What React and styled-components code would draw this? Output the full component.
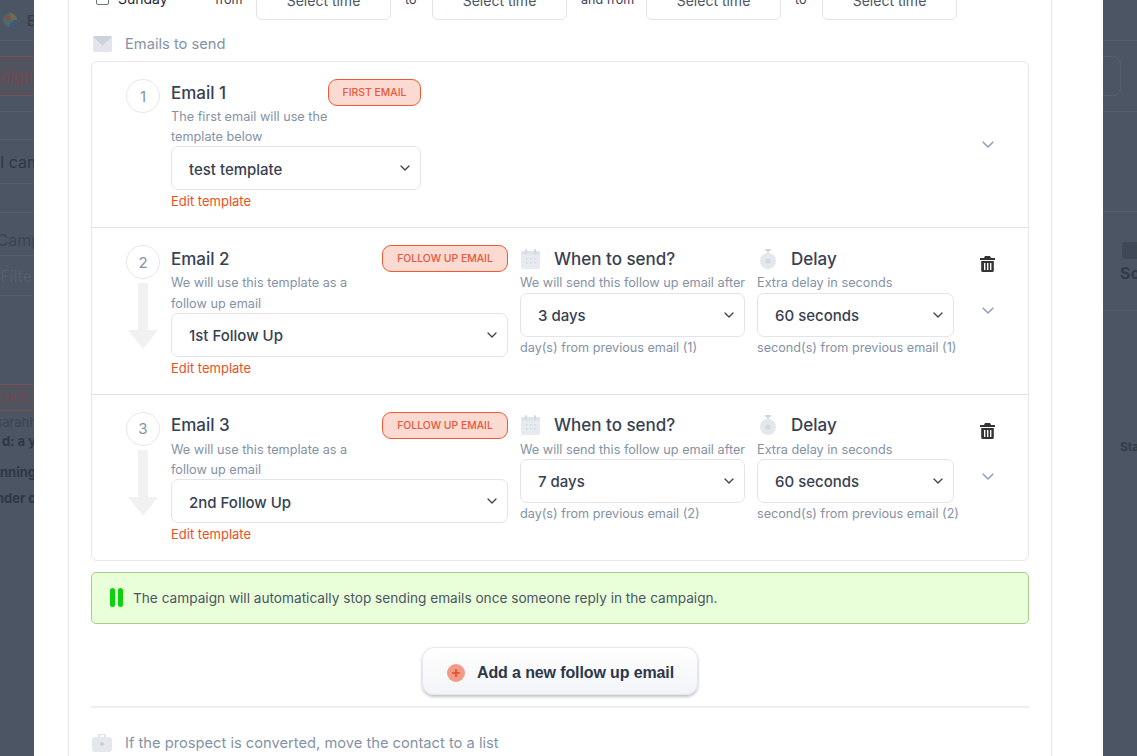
import React from "react";
import styled, { createGlobalStyle } from "styled-components";

const Global = createGlobalStyle`
  html, body { margin: 0; padding: 0; height: 100%; background: #4b5563; }
  body { font-family: Inter, "Liberation Sans", sans-serif; }
  * { box-sizing: border-box; }
`;

const Page = styled.div`
  display: flex;
  width: 100%;
  height: 756px;
  overflow: hidden;
  background: #4b5563;
`;
const Strip = styled.aside`
  flex: 0 0 34px;
  width: 34px;
  height: 100%;
  overflow: hidden;
  display: flex;
  flex-direction: column;
  color: #2f3744;
  font-size: 15px;
`;
const StripRow = styled.div`
  height: ${(p) => p.$h}px;
  flex: 0 0 auto;
  display: flex;
  align-items: center;
  gap: 8px;
  white-space: nowrap;
  justify-content: ${(p) => (p.$start ? "flex-start" : "flex-end")};
  border-bottom: ${(p) => (p.$line ? "1px solid #545d6b" : "0")};
  font-weight: ${(p) => (p.$bold ? 700 : 400)};
  font-size: ${(p) => p.$size || 13}px;
  color: ${(p) => p.$color || "#2f3744"};
  padding-left: ${(p) => p.$pad || 0}px;
  padding-top: ${(p) => p.$top || 0}px;
  margin-right: ${(p) => -(p.$shift || 0)}px;
`;
const PinkBox = styled.div`
  height: 40px;
  flex: 0 0 auto;
  display: flex;
  align-items: center;
  white-space: nowrap;
  justify-content: flex-end;
  width: 41px;
  border: 1px solid #7b4e52;
  border-left: 0;
  border-right: 0;
  background: #51545f;
  color: #74474c;
  font-size: 16px;
`;
const Tag = styled(PinkBox)`
  width: 34px;
  height: 27px;
  font-size: 10.5px;
  letter-spacing: 0.6px;
  padding-right: 6px;
`;
const GhostBox = styled.div`
  width: 18px;
  height: 40px;
  flex: 0 0 auto;
  border: 1px solid #565f6c;
  border-left: 0;
  border-radius: 0 8px 8px 0;
`;
const Modal = styled.main`
  flex: 1 1 auto;
  height: 100%;
  background: #fff;
  padding: 0 34px;
  overflow: hidden;
`;
const Card = styled.div`
  margin-top: -24px;
  width: 984px;
  min-height: 900px;
  background: #fff;
  border: 1px solid #e6e8ee;
  border-top: 0;
  padding: 0 22px;
`;
const DayRow = styled.div`
  height: 44px;
  display: flex;
  align-items: center;
  font-size: 14px;
  color: #374151;
  padding-left: 5px;
`;
const DayLabel = styled.label`
  width: 119px;
  display: flex;
  align-items: center;
  gap: 9px;
  color: #1f2937;
  padding-top: 1px;
`;
const DayBox = styled.span`
  width: 13px;
  height: 13px;
  border: 1px solid #6b7280;
  border-radius: 2px;
  flex: 0 0 auto;
`;
const Conn = styled.span`
  flex: 0 0 ${(p) => p.$w}px;
  width: ${(p) => p.$w}px;
  padding-left: ${(p) => p.$pad}px;
  font-size: 12.5px;
  white-space: nowrap;
  padding-top: 3px;
`;
const TimeSelect = styled.div`
  flex: 0 0 135px;
  width: 135px;
  height: 44px;
  border: 1px solid #e2e4ec;
  border-radius: 6px;
  display: flex;
  align-items: center;
  justify-content: center;
  padding-top: 4px;
  color: #4b5563;
  font-size: 14px;
`;
const SectionHead = styled.div`
  display: flex;
  align-items: center;
  gap: 13px;
  height: 22px;
  margin-top: ${(p) => p.$mt}px;
  margin-bottom: ${(p) => p.$mb || 0}px;
  color: #8492a6;
  font-size: 14.7px;
  padding-left: 1px;
`;
const EmailList = styled.section`
  border: 1px solid #e5e7eb;
  border-radius: 6px;
`;
const EmailRow = styled.div`
  display: flex;
  padding: 17px 0 15.9px 34px;
  border-top: ${(p) => (p.$first ? "0" : "1px solid #dfe2e8")};
`;
const NumCol = styled.div`
  flex: 0 0 45px;
  width: 45px;
  display: flex;
  flex-direction: column;
`;
const Circle = styled.div`
  width: 34px;
  height: 34px;
  border-radius: 50%;
  border: 1px solid #e5e7eb;
  display: flex;
  align-items: center;
  justify-content: center;
  color: #8492a6;
  font-size: 15px;
`;
const Arrow = styled.svg`
  display: block;
  margin: 4px 0 0 2px;
`;
const Col = styled.div`
  flex: 0 0 ${(p) => p.$w}px;
  width: ${(p) => p.$w}px;
  margin-right: ${(p) => p.$mr || 0}px;
`;
const HeadRow = styled.div`
  height: 27px;
  display: flex;
  align-items: center;
  justify-content: space-between;
`;
const IconHead = styled(HeadRow)`
  justify-content: flex-start;
  gap: ${(p) => p.$gap}px;
  padding-left: ${(p) => p.$pad}px;
`;
const Title = styled.h3`
  margin: 0;
  padding-top: 1px;
  font-size: 17px;
  line-height: 27px;
  font-weight: 500;
  color: #374151;
`;
const Badge = styled.span`
  height: 27px;
  width: ${(p) => p.$w}px;
  display: inline-flex;
  align-items: center;
  justify-content: center;
  border: 1px solid #ee5a33;
  border-radius: 9px;
  background: #fbdad2;
  color: #e9573a;
  font-size: 10.4px;
  font-weight: 500;
  white-space: nowrap;
`;
const Desc = styled.p`
  margin: 1px 0 -1px;
  font-size: 12.7px;
  line-height: 20.2px;
  color: #8492a6;
  white-space: ${(p) => (p.$nowrap ? "nowrap" : "normal")};
  max-width: ${(p) => (p.$nowrap ? "none" : "180px")};
`;
const Select = styled.div`
  height: 44px;
  border: 1px solid #e2e4ec;
  border-radius: 7px;
  display: flex;
  align-items: center;
  justify-content: space-between;
  padding: 0 10px 0 17px;
  font-size: 15px;
  font-weight: 500;
  color: #374151;
  background: #fff;
`;
const SelectValue = styled.span`
  padding-top: 2px;
`;
const EditLink = styled.a`
  display: block;
  padding-top: 1px;
  font-size: 13px;
  line-height: 20px;
  color: #ee4f23;
`;
const Hint = styled.p`
  margin: 0;
  font-size: 12.65px;
  line-height: 22px;
  color: #8492a6;
  white-space: nowrap;
`;
const Actions = styled.div`
  flex: 0 0 auto;
  margin-left: auto;
  width: 74px;
  padding-right: 7px;
  padding-bottom: 2px;
  display: grid;
  grid-template-rows: 1fr auto 1fr;
  justify-items: center;
`;
const TrashSlot = styled.div`
  align-self: start;
  padding: 11px 1px 0 0;
  height: 27px;
`;
const Alert = styled.div`
  margin-top: 11px;
  height: 52px;
  border: 1px solid #a7cd8b;
  border-radius: 5px;
  background: #e9ffd9;
  display: flex;
  align-items: center;
  gap: 10px;
  padding-left: 18px;
  color: #4b5563;
  font-size: 13.65px;
`;
const PauseBars = styled.div`
  display: flex;
  gap: 3px;
`;
const PauseBar = styled.span`
  width: 5px;
  height: 19px;
  border-radius: 3px;
  background: #0bd20b;
`;
const ButtonRow = styled.div`
  margin-top: 23px;
  display: flex;
  justify-content: center;
`;
const AddButton = styled.button`
  width: 276px;
  height: 48px;
  border: 1px solid #e6e6ee;
  border-radius: 12px;
  background: linear-gradient(180deg, #ffffff, #f2f4f7);
  box-shadow: 0 2px 3px rgba(70, 80, 100, 0.35);
  display: flex;
  align-items: center;
  gap: 12px;
  padding: 4px 0 0 24px;
  font-family: "Liberation Sans", Arial, sans-serif;
  font-weight: 700;
  font-size: 16px;
  letter-spacing: -0.12px;
  color: #2d3748;
`;
const PlusCircle = styled.span`
  width: 18px;
  height: 18px;
  border-radius: 50%;
  background: #f19b86;
  display: flex;
  align-items: center;
  justify-content: center;
`;
const Divider = styled.hr`
  margin: 11px 0 0;
  border: 0;
  border-top: 2px solid #eeeff2;
`;

const Chevron = ({ color = "#374151", w = 10 }) => (
  <svg width={w} height={w * 0.6} viewBox="0 0 10 6" fill="none" stroke={color} strokeWidth="1.3" strokeLinecap="round" strokeLinejoin="round">
    <path d="M1 1l4 4 4-4" />
  </svg>
);
const Envelope = () => (
  <svg width="20" height="16" viewBox="-1 0 20 16">
    <rect width="19" height="16" rx="2" fill="#e2e6ec" />
    <path d="M1.5 0h16a1.5 1.5 0 0 1 1.2 1.2L9.5 9.5.3 1.2A1.5 1.5 0 0 1 1.5 0z" fill="#cdd3dc" />
  </svg>
);
const Calendar = () => (
  <svg width="19" height="20" viewBox="0 0 19 20">
    <rect y="2" width="19" height="18" rx="2" fill="#e7ebf0" />
    <rect y="2" width="19" height="4" rx="1.5" fill="#dfe4ea" />
    <rect x="4" width="2" height="5" rx="1" fill="#d3d9e1" />
    <rect x="13" width="2" height="5" rx="1" fill="#d3d9e1" />
    <g fill="#cfd6de">
      <rect x="5" y="9" width="1.5" height="1.5" /><rect x="9" y="9" width="1.5" height="1.5" /><rect x="13" y="9" width="1.5" height="1.5" />
      <rect x="5" y="13" width="1.5" height="1.5" /><rect x="9" y="13" width="1.5" height="1.5" /><rect x="13" y="13" width="1.5" height="1.5" />
    </g>
  </svg>
);
const Stopwatch = () => (
  <svg width="16" height="20" viewBox="0 0 16 20">
    <rect x="5" y="0" width="6" height="2" rx="1" fill="#d0d6de" />
    <rect x="7" y="2" width="2" height="3" fill="#d8dde4" />
    <circle cx="8" cy="12" r="8" fill="#e4e8ed" />
    <circle cx="8" cy="12" r="2.6" fill="#d3d9e0" />
  </svg>
);
const Trash = () => (
  <svg width="15" height="16" viewBox="0 0 15 16">
    <path d="M5 0h5l1 2h4v2H0V2h4z" fill="#333" />
    <path fillRule="evenodd" d="M1.2 5h12.6v9.5a1.5 1.5 0 0 1-1.5 1.5H2.7a1.5 1.5 0 0 1-1.5-1.5zM4 7v7h1.4V7zm3 0v7h1.4V7zm3 0v7h1.4V7z" fill="#333" />
  </svg>
);
const Case = () => (
  <svg width="20" height="18" viewBox="0 0 20 18">
    <path d="M7 4V2a2 2 0 0 1 2-2h2a2 2 0 0 1 2 2v2" fill="none" stroke="#dfe3e9" strokeWidth="2" />
    <rect y="3" width="20" height="15" rx="3" fill="#e4e8ed" />
    <circle cx="10" cy="10" r="2" fill="#c9d0d9" />
  </svg>
);
const DownArrow = () => (
  <Arrow width="30" height="66" viewBox="0 0 30 66">
    <path d="M10 0h10v47h10L15 66 0 47h10z" fill="#f1f1f1" />
  </Arrow>
);

const rows = [
  { n: 2, tpl: "1st Follow Up", days: "3 days" },
  { n: 3, tpl: "2nd Follow Up", days: "7 days" },
];

export default function App() {
  return (
    <Page>
      <Global />
      <Strip>
        <StripRow $h={41} $line $start $pad={1} $size={15} $color="#333b48">
          <svg width="18" height="18" viewBox="0 0 18 18" style={{ flex: "none" }}>
            <circle cx="9" cy="9" r="7" fill="#4d6b62" />
            <path d="M9 2a7 7 0 0 1 7 7H9z" fill="#6f6a50" />
            <circle cx="7" cy="7" r="2.5" fill="#7c4f57" />
            <path d="M9 16a7 7 0 0 0 7-7h-4a3 3 0 0 1-3 3z" fill="#3a5a80" />
          </svg>
          <span>B</span>
        </StripRow>
        <StripRow $h={15} />
        <PinkBox>Campaigns</PinkBox>
        <StripRow $h={16} $line />
        <StripRow $h={28} $line />
        <StripRow $h={44} $line $size={16} $shift={7}>All email cam</StripRow>
        <StripRow $h={29} $line />
        <StripRow $h={43} $line $size={16} $top={12} $shift={7} $color="#3b4452">
          Camp
        </StripRow>
        <StripRow $h={40} $line $size={16} $color="#565f6d" $shift={-2}>Filte</StripRow>
        <StripRow $h={88} />
        <Tag>SEQUENCE</Tag>
        <StripRow $h={22} $size={13} $color="#3b4452" $shift={3}>sarahh</StripRow>
        <StripRow $h={16} $bold $shift={2}>Subject d: a y</StripRow>
        <StripRow $h={14} />
        <StripRow $h={18} $bold $shift={2}>Running</StripRow>
        <StripRow $h={8} />
        <StripRow $h={18} $bold $shift={2}>Reminder c</StripRow>
      </Strip>
      <Modal>
        <Card>
          <DayRow>
            <DayLabel><DayBox />Sunday</DayLabel>
            <Conn $w={41} $pad={0}>from</Conn>
            <TimeSelect>Select time</TimeSelect>
            <Conn $w={41} $pad={14}>to</Conn>
            <TimeSelect>Select time</TimeSelect>
            <Conn $w={79} $pad={14}>and from</Conn>
            <TimeSelect>Select time</TimeSelect>
            <Conn $w={41} $pad={14}>to</Conn>
            <TimeSelect>Select time</TimeSelect>
          </DayRow>
          <SectionHead $mt={13} $mb={6}><Envelope />Emails to send</SectionHead>
          <EmailList>
            <EmailRow $first>
              <NumCol><Circle>1</Circle></NumCol>
              <Col $w={250}>
                <HeadRow><Title>Email 1</Title><Badge $w={93}>FIRST EMAIL</Badge></HeadRow>
                <Desc>The first email will use the template below</Desc>
                <Select><SelectValue>test template</SelectValue><Chevron /></Select>
                <EditLink>Edit template</EditLink>
              </Col>
              <Actions><span /><Chevron color="#8ea0bb" w={12} /><span /></Actions>
            </EmailRow>
            {rows.map((r) => (
              <EmailRow key={r.n}>
                <NumCol><Circle>{r.n}</Circle><DownArrow /></NumCol>
                <Col $w={337} $mr={12}>
                  <HeadRow><Title>Email {r.n}</Title><Badge $w={126}>FOLLOW UP EMAIL</Badge></HeadRow>
                  <Desc>We will use this template as a follow up email</Desc>
                  <Select><SelectValue>{r.tpl}</SelectValue><Chevron /></Select>
                  <EditLink>Edit template</EditLink>
                </Col>
                <Col $w={225} $mr={12}>
                  <IconHead $gap={14} $pad={1}><Calendar /><Title>When to send?</Title></IconHead>
                  <Desc $nowrap>We will send this follow up email after</Desc>
                  <Select><SelectValue>{r.days}</SelectValue><Chevron /></Select>
                  <Hint>day(s) from previous email ({r.n - 1})</Hint>
                </Col>
                <Col $w={197}>
                  <IconHead $gap={15} $pad={3}><Stopwatch /><Title>Delay</Title></IconHead>
                  <Desc $nowrap>Extra delay in seconds</Desc>
                  <Select><SelectValue>60 seconds</SelectValue><Chevron /></Select>
                  <Hint>second(s) from previous email ({r.n - 1})</Hint>
                </Col>
                <Actions>
                  <TrashSlot><Trash /></TrashSlot>
                  <Chevron color="#8ea0bb" w={12} />
                  <span />
                </Actions>
              </EmailRow>
            ))}
          </EmailList>
          <Alert>
            <PauseBars><PauseBar /><PauseBar /></PauseBars>
            The campaign will automatically stop sending emails once someone reply in the campaign.
          </Alert>
          <ButtonRow>
            <AddButton>
              <PlusCircle>
                <svg width="10" height="10" viewBox="0 0 10 10"><path d="M5 1v8M1 5h8" stroke="#e9492a" strokeWidth="1.6" /></svg>
              </PlusCircle>
              Add a new follow up email
            </AddButton>
          </ButtonRow>
          <Divider />
          <SectionHead $mt={24}><Case />If the prospect is converted, move the contact to a list</SectionHead>
        </Card>
      </Modal>
      <Strip>
        <StripRow $h={41} $line />
        <StripRow $h={15} />
        <GhostBox />
        <StripRow $h={16} $line />
        <StripRow $h={100} $line />
        <StripRow $h={30} />
        <svg width="34" height="17" viewBox="0 0 34 17" style={{ flex: "none" }}>
          <rect x="19" width="20" height="17" rx="3" fill="#3f4855" />
        </svg>
        <StripRow $h={28} $start $pad={17} $size={16} $bold $color="#333b48">Schedule</StripRow>
        <StripRow $h={24} $line />
        <StripRow $h={125} />
        <StripRow $h={20} $start $pad={17} $size={12} $bold $color="#333b48">Status</StripRow>
      </Strip>
    </Page>
  );
}
